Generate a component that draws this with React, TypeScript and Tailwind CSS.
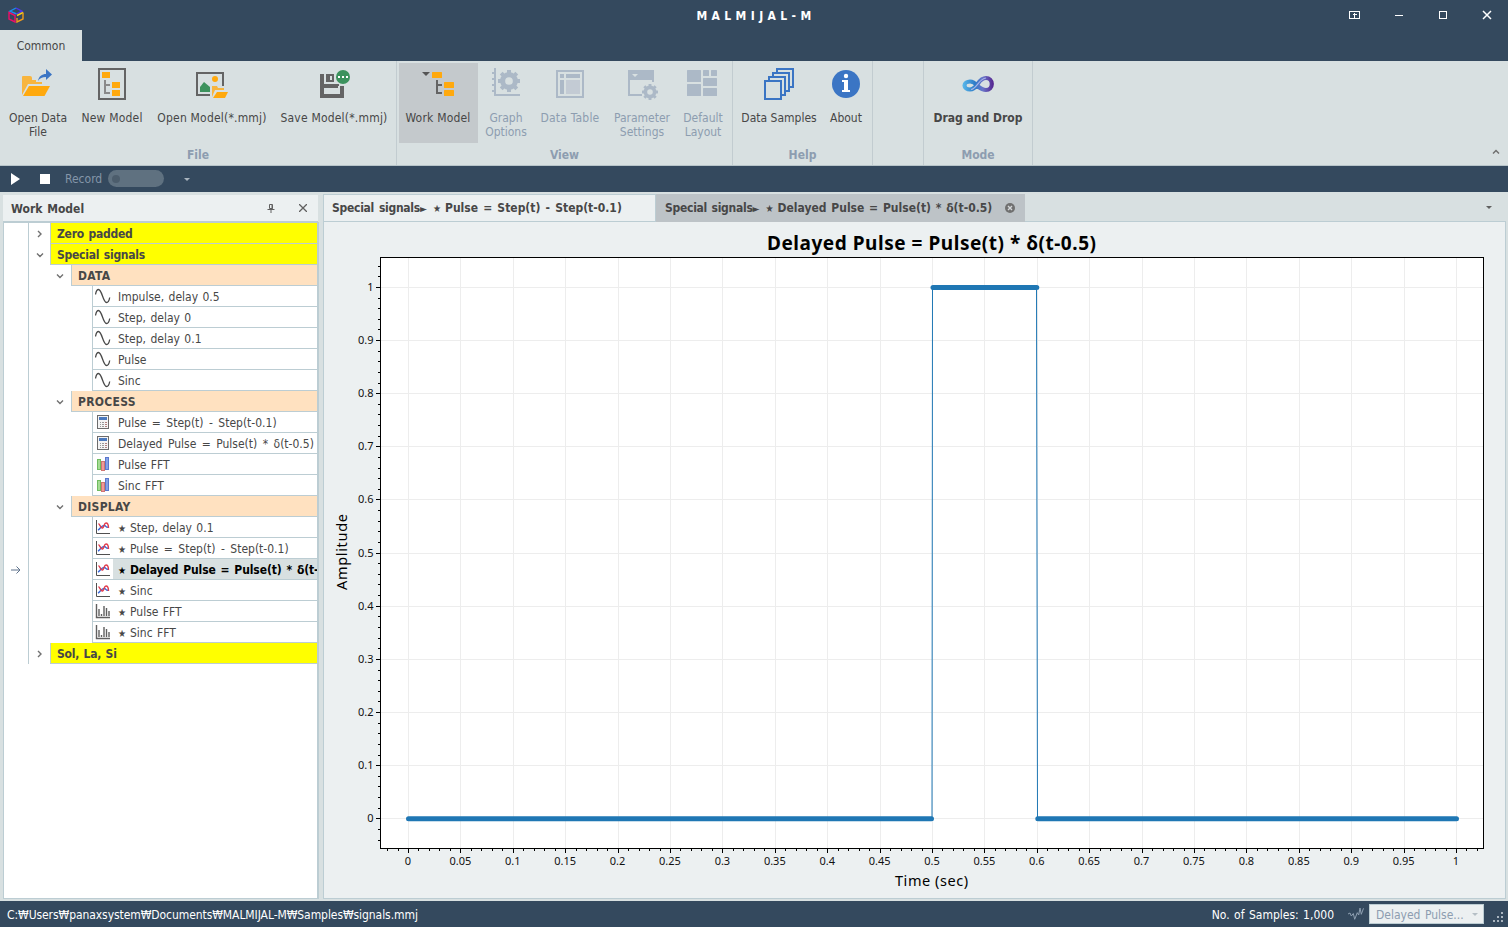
import React from 'react';

type RowKind = 'root' | 'group' | 'leaf';
type LeafIcon = 'wave' | 'calc' | 'bars' | 'plot' | 'spectrum';

interface TreeRow {
  kind: RowKind;
  label: string;
  open?: boolean;
  icon?: LeafIcon;
  star?: boolean;
  selected?: boolean;
}

const rows: TreeRow[] = [
  { kind: 'root', label: 'Zero padded', open: false },
  { kind: 'root', label: 'Special signals', open: true },
  { kind: 'group', label: 'DATA', open: true },
  { kind: 'leaf', label: 'Impulse, delay 0.5', icon: 'wave' },
  { kind: 'leaf', label: 'Step, delay 0', icon: 'wave' },
  { kind: 'leaf', label: 'Step, delay 0.1', icon: 'wave' },
  { kind: 'leaf', label: 'Pulse', icon: 'wave' },
  { kind: 'leaf', label: 'Sinc', icon: 'wave' },
  { kind: 'group', label: 'PROCESS', open: true },
  { kind: 'leaf', label: 'Pulse = Step(t) - Step(t-0.1)', icon: 'calc' },
  { kind: 'leaf', label: 'Delayed Pulse = Pulse(t) * δ(t-0.5)', icon: 'calc' },
  { kind: 'leaf', label: 'Pulse FFT', icon: 'bars' },
  { kind: 'leaf', label: 'Sinc FFT', icon: 'bars' },
  { kind: 'group', label: 'DISPLAY', open: true },
  { kind: 'leaf', label: 'Step, delay 0.1', icon: 'plot', star: true },
  { kind: 'leaf', label: 'Pulse = Step(t) - Step(t-0.1)', icon: 'plot', star: true },
  { kind: 'leaf', label: 'Delayed Pulse = Pulse(t) * δ(t-', icon: 'plot', star: true, selected: true },
  { kind: 'leaf', label: 'Sinc', icon: 'plot', star: true },
  { kind: 'leaf', label: 'Pulse FFT', icon: 'spectrum', star: true },
  { kind: 'leaf', label: 'Sinc FFT', icon: 'spectrum', star: true },
  { kind: 'root', label: 'Sol, La, Si', open: false },
];

/* ---------- Ribbon icons (32x32) ---------- */

const Icon32: React.FC<{ children: React.ReactNode }> = ({ children }) => (
  <svg width="32" height="32" viewBox="0 0 32 32" className="shrink-0">
    {children}
  </svg>
);

const OpenDataIcon = () => (
  <Icon32>
    <path d="M0 27V9a1 1 0 0 1 1-1h7a2 2 0 0 1 2 2v2h4v2h6v2H6z" fill="#f8b53e" />
    <path d="M7 18h21l-5.500 10H1z" fill="#ffa90e" />
    <path d="M16 13c1-5 4-7 8-7V1l6 5.500-6 5.500V9c-4 0-6 1-8 4z" fill="#3b75c4" />
  </Icon32>
);

const NewModelIcon = () => (
  <Icon32>
    <rect x="3" y="1" width="26" height="30" fill="none" stroke="#646464" strokeWidth="2" />
    <path d="M6 4h8v6H6zM16 14h8v6h-8zM16 22h8v6h-8z" fill="#ffa90e" />
    <path d="M9 12v13h5M9 17h5" fill="none" stroke="#8a8a8a" strokeWidth="2" />
  </Icon32>
);

const OpenModelIcon = () => (
  <Icon32>
    <path d="M14 27H1V5h26v13" fill="none" stroke="#646464" strokeWidth="2" />
    <circle cx="19" cy="11" r="3" fill="#ffa90e" />
    <path d="M4 24v-5l4-5 6 5v5z" fill="#3c925d" />
    <path d="M16 29V18h5l1 2h6v2h-9z" fill="#f8b53e" />
    <path d="M21 24h11l-3 6H17z" fill="#ffa90e" />
  </Icon32>
);

const SaveModelIcon = () => (
  <Icon32>
    <path fillRule="evenodd" d="M2 6h4v10h15v2h5v12H2zM6 20v6h16v-6z" fill="#646464" />
    <path d="M20 18h2v2h-2z" fill="#d8e0e1" />
    <path fillRule="evenodd" d="M8 6h8v8H8zM12 8v4h2V8z" fill="#646464" />
    <circle cx="25" cy="9" r="8.500" fill="#d8e0e1" />
    <circle cx="25" cy="9" r="7" fill="#3c925d" />
    <path d="M20 8h2v2h-2zM24 8h2v2h-2zM28 8h2v2h-2z" fill="#fff" />
  </Icon32>
);

const WorkModelIcon = () => (
  <Icon32>
    <path d="M0 4h8L4 8z" fill="#555" />
    <rect x="10" y="4" width="10" height="6" rx="0.500" fill="#ffa90e" />
    <rect x="22" y="14" width="10" height="6" rx="0.500" fill="#ffa90e" />
    <rect x="22" y="22" width="10" height="6" rx="0.500" fill="#ffa90e" />
    <path d="M15 12v13h5M15 17h5" fill="none" stroke="#646464" strokeWidth="2" />
  </Icon32>
);

// eight-toothed gear centred on cx, cy
const Gear: React.FC<{ cx: number; cy: number; r: number }> = ({ cx, cy, r }) => (
  <g fill="none" stroke="#acb9c7">
    <circle cx={cx} cy={cy} r={r * 0.58} strokeWidth={r * 0.46} />
    {[0, 45, 90, 135, 180, 225, 270, 315].map((a) => (
      <path
        key={a}
        d={`M${cx} ${cy - r * 0.7}V${cy - r}`}
        strokeWidth={r * 0.36}
        transform={`rotate(${a} ${cx} ${cy})`}
      />
    ))}
  </g>
);

const GraphOptionsIcon = () => (
  <Icon32>
    <path d="M5 0v28M4 27h26M2 5h3M2 11h3M2 17h3M2 23h3" fill="none" stroke="#acb9c7" strokeWidth="2" />
    <Gear cx={19} cy={13} r={11} />
  </Icon32>
);

const DataTableIcon = () => (
  <Icon32>
    <rect x="3" y="3" width="26" height="26" fill="none" stroke="#acb9c7" strokeWidth="2" />
    <path d="M6 6h4v4H6zM12 6h14v4H12zM6 12h4v14H6z" fill="#acb9c7" />
    <path d="M12 12h14v14H12z" fill="#c3cbd4" />
  </Icon32>
);

const ParameterIcon = () => (
  <Icon32>
    <path fillRule="evenodd" d="M2 2h26v12h-2v-2H4v14h12v2H2zM6 6l3 3 3-3z" fill="#acb9c7" />
    <Gear cx={24} cy={24} r={8} />
  </Icon32>
);

const LayoutIcon = () => (
  <Icon32>
    <g fill="#acb9c7">
      <rect x="0" y="2" width="14" height="12" rx="0.500" />
      <rect x="16" y="2" width="6" height="6" rx="0.500" />
      <rect x="24" y="2" width="6" height="6" rx="0.500" />
      <rect x="16" y="10" width="14" height="8" rx="0.500" />
      <rect x="0" y="16" width="14" height="12" rx="0.500" />
      <rect x="16" y="20" width="14" height="8" rx="0.500" />
    </g>
  </Icon32>
);

const SamplesIcon = () => (
  <Icon32>
    <g fill="#d8e0e1" stroke="#3b75c4" strokeWidth="2">
      <path d="M14 1h16v18H14z" />
      <path d="M10 5h16v18H10z" />
      <path d="M6 9h16v18H6z" />
      <path d="M2 13h16v18H2z" />
    </g>
  </Icon32>
);

const AboutIcon = () => (
  <Icon32>
    <circle cx="16" cy="16" r="14" fill="#3b75c4" />
    <circle cx="16" cy="8" r="2.200" fill="#fff" />
    <path d="M12 12h6v10h2v2h-8v-2h2v-8h-2z" fill="#fff" />
  </Icon32>
);

const InfinityIcon = () => (
  <Icon32>
    <defs>
      <linearGradient id="loop" gradientUnits="userSpaceOnUse" x1="0" y1="0" x2="32" y2="0">
        <stop offset="0" stopColor="#5cbcec" />
        <stop offset="0.400" stopColor="#2f7cc8" />
        <stop offset="0.650" stopColor="#6a74c8" />
        <stop offset="1" stopColor="#54208c" />
      </linearGradient>
    </defs>
    <path
      d="M15 17.500c-2-2.500-4-4-7-4a5.500 4 0 0 0 0 8c4 0 6-3 8-6s4-5.500 8-5.500a5.800 6 0 0 1 0 12c-4 0-6-2-9-4.500z"
      fill="none"
      stroke="url(#loop)"
      strokeWidth="4.200"
    />
    <path d="M9 21.500c6-1 8-11 15-11.500" fill="none" stroke="#a9b4e8" strokeWidth="1.200" />
  </Icon32>
);

/* ---------- Tree icons (16x16) ---------- */

const leafIcons: Record<LeafIcon, React.ReactNode> = {
  wave: (
    <path
      d="M0.500 6.500C1 3.500 2 1.500 3.500 1.500c3.500 0 4.500 13 8 13 1.700 0 2.700-2 3.200-5"
      fill="none"
      stroke="#484848"
      strokeWidth="1.300"
    />
  ),
  calc: (
    <>
      <rect x="2.500" y="1.500" width="11" height="13" fill="#f4f4f4" stroke="#6c6c6c" />
      <path d="M4 3h8v3H4z" fill="#4a78bd" />
      <path d="M5 8h1v1H5zM7 8h2v1H7zM5 10h1v1H5zM7 10h2v1H7zM5 12h1v1H5zM7 12h2v1H7z" fill="#999" />
      <path d="M10 8h2v1h-2zM10 10h2v1h-2zM10 12h2v1h-2z" fill="#b08080" />
    </>
  ),
  bars: (
    <>
      <rect x="2.500" y="3.500" width="3" height="10" fill="#a5dc94" stroke="#6fbb60" />
      <rect x="6.500" y="5.500" width="3" height="9" fill="#f09a98" stroke="#d07572" />
      <rect x="10.500" y="1.500" width="3" height="12" fill="#86a2e6" stroke="#5a78cc" />
    </>
  ),
  plot: (
    <>
      <path d="M1.500 1v13.500H15" fill="none" stroke="#505050" />
      <path d="M3 11c2-1 3.500-4.500 6-4.500s2 3 4.500 1.500" fill="none" stroke="#3a68d8" strokeWidth="1.400" />
      <path d="M3.500 4.500c1.500 1 2.500 5 4 4.500s1.500-5 3.500-5 2.500 2.500 2.500 5" fill="none" stroke="#e03c4c" strokeWidth="1.400" />
    </>
  ),
  spectrum: (
    <path
      d="M1.500 1v13.500H15M4 13V6M6.500 13v-2M9 13V3M11.500 13V5M14 13V8"
      fill="none"
      stroke="#606060"
      strokeWidth="1.400"
    />
  ),
};

const Chevron: React.FC<{ open?: boolean }> = ({ open }) => (
  <svg width="8" height="8" viewBox="0 0 8 8" className="shrink-0">
    <path
      d={open ? 'M1 2.500l3 3 3-3' : 'M2 1l3 3-3 3'}
      fill="none"
      stroke="#707070"
      strokeWidth="1.400"
    />
  </svg>
);

const Star = () => <span className="inline-block w-3 text-[10px] leading-none">★</span>;

const TreeItem: React.FC<{ row: TreeRow }> = ({ row }) => {
  const formula = row.label.includes('=');

  return (
    <div className="flex h-[21px]">
      <div className="w-[25px] shrink-0 border-r border-[#bccdd3] flex items-center justify-center">
        {row.selected && (
          <svg width="10" height="8" viewBox="0 0 10 8">
            <path d="M0 4h9M5.500 0.500L9 4 5.500 7.500" fill="none" stroke="#5d718a" />
          </svg>
        )}
      </div>
      {row.kind === 'root' && (
        <>
          <div className="w-[21px] shrink-0 flex items-center justify-center">
            <Chevron open={row.open} />
          </div>
          <div className="flex-1 bg-[#ffff00] border-l border-b border-[#bccdd3] pl-1.5 leading-[22px] font-bold tracking-[-0.24px]">
            {row.label}
          </div>
        </>
      )}
      {row.kind === 'group' && (
        <>
          <div className="w-[42px] shrink-0 pl-[27px] flex items-center">
            <Chevron open={row.open} />
          </div>
          <div className="flex-1 bg-[#ffe1c0] border-l border-b border-[#bccdd3] pl-1.5 leading-[22px] font-bold tracking-[0.3px]">
            {row.label}
          </div>
        </>
      )}
      {row.kind === 'leaf' && (
        <div className="flex-1 min-w-0 ml-[63px] border-l border-b border-[#bccdd3] flex">
          <svg width="16" height="16" viewBox="0 0 16 16" className="shrink-0 mt-0.5 ml-0.5 mr-0.5">
            {leafIcons[row.icon!]}
          </svg>
          <div
            className={`flex-1 min-w-0 overflow-hidden whitespace-nowrap pl-[5px] leading-[22px] ${
              row.selected
                ? 'bg-[#d8e0e1] text-black font-bold [word-spacing:1.2px] tracking-[-0.1px]'
                : formula
                  ? '[word-spacing:2px]'
                  : ''
            }`}
          >
            {row.star && <Star />}
            {row.label}
          </div>
        </div>
      )}
    </div>
  );
};

/* ---------- Ribbon ---------- */

interface ToolProps {
  icon: React.ReactNode;
  label: string;
  width: string;
  active?: boolean;
  disabled?: boolean;
  bold?: boolean;
  wide?: boolean;
}

const Tool: React.FC<ToolProps> = ({ icon, label, width, active, disabled, bold, wide }) => (
  <button
    className={`${width} h-20 shrink-0 pt-[5px] flex flex-col items-center ${active ? 'bg-[#c4c9cc] pr-px' : ''} ${
      disabled ? 'text-[#8d9db0]' : ''
    } ${bold ? 'font-bold' : ''} ${wide ? 'tracking-[0.2px]' : ''}`}
  >
    {icon}
    <span className="mt-[11px] leading-[14px] whitespace-pre text-center">{label}</span>
  </button>
);

const Group: React.FC<{ title?: string; width: string; children?: React.ReactNode }> = ({
  title,
  width,
  children,
}) => (
  <div className={`${width} shrink-0 border-r border-[#c2ccd0] pt-0.5 flex flex-col`}>
    <div className="flex h-20">{children}</div>
    <div className="mt-1 leading-4 text-center font-bold text-[#8d9db0]">{title}</div>
  </div>
);

/* ---------- Document tabs ---------- */

const TabTitle: React.FC<{ folder: string; name: string }> = ({ folder, name }) => (
  <span>
    <span className="tracking-[-0.27px]">{folder}</span>
    <span className="inline-block w-[13px] text-[10px] leading-none">►</span>
    <Star />
    {name}
  </span>
);

/* ---------- Chart ---------- */

const sx = (v: number) => 84.5 + v * 1048;
const sy = (v: number) => 596.8 - v * 531.4;
const px = (v: number) => Math.floor(v) + 0.5;
const range = (from: number, to: number) => Array.from({ length: to - from + 1 }, (_, i) => from + i);

const Chart = () => (
  <svg
    width="1181"
    height="676"
    viewBox="0 0 1181 676"
    className="block font-stretch-normal [word-spacing:0] font-['Noto_Sans',sans-serif]"
  >
    <rect x="56.500" y="35.500" width="1103" height="591" fill="#fff" />
    {range(0, 20).map((i) => (
      <path key={i} d={`M${px(sx(i / 20))} 36V626`} stroke="#ededed" />
    ))}
    {range(0, 10).map((i) => (
      <path key={i} d={`M57 ${px(sy(i / 10))}H1159`} stroke="#ededed" />
    ))}
    <rect x="56.500" y="35.500" width="1103" height="591" fill="none" stroke="#000" />

    {/* minor ticks */}
    {range(-2, 102).map((i) => (
      <path key={i} d={`M${px(sx(i / 100))} 627v2`} stroke="#000" />
    ))}
    {range(-2, 52).map((i) => (
      <path key={i} d={`M56 ${px(sy(i / 50))}h-2`} stroke="#000" />
    ))}

    {/* major ticks and labels */}
    {range(0, 20).map((i) => (
      <g key={i}>
        <path d={`M${px(sx(i / 20))} 627v4`} stroke="#000" />
        <text x={sx(i / 20) - 0.5} y="642.500" textAnchor="middle" fontSize="11" fill="#111">
          {i / 20}
        </text>
      </g>
    ))}
    {range(0, 10).map((i) => (
      <g key={i}>
        <path d={`M56 ${px(sy(i / 10))}h-4`} stroke="#000" />
        <text x="49.500" y={px(sy(i / 10)) + 3.5} textAnchor="end" fontSize="11" fill="#111">
          {i / 10}
        </text>
      </g>
    ))}

    {/* signal */}
    <path
      d={`M${sx(0)} ${sy(0)}H608L608.5 ${sy(1)}H712.5L713.5 ${sy(0)}H${sx(1)}`}
      fill="none"
      stroke="#1f77b4"
    />
    <path
      d={`M${sx(0)} ${sy(0)}H607.5M${sx(0.5) + 0.5} ${sy(1)}H${sx(0.6) - 0.5}M${sx(0.6) + 0.5} ${sy(0)}H${sx(1)}`}
      stroke="#1f77b4"
      strokeWidth="5"
      strokeLinecap="round"
    />

    <text x="607.500" y="28" textAnchor="middle" fontSize="19" fontWeight="700" textLength="329">
      Delayed Pulse = Pulse(t) * δ(t-0.5)
    </text>
    <text x="607.500" y="664" textAnchor="middle" fontSize="14.500" textLength="73">
      Time (sec)
    </text>
    <text x="23" y="330" textAnchor="middle" fontSize="14.500" textLength="76" transform="rotate(-90 23 330)">
      Amplitude
    </text>
  </svg>
);

export default function App() {
  return (
    <div className="w-[1508px] h-[927px] overflow-hidden flex flex-col bg-[#d8e0e1] text-[#474747] text-[12px] [word-spacing:1px] font-stretch-condensed font-['DejaVu_Sans','Noto_Sans_CJK_KR',sans-serif]">
      {/* Title bar */}
      <header className="h-[30px] shrink-0 bg-[#34495e] flex items-center pl-2 pr-[15px]">
        <svg width="16" height="16" viewBox="0 0 16 16" className="shrink-0" fill="none" strokeWidth="1.400">
          <path d="M8.500 7L2 4.200 8 1" stroke="#1d8df0" />
          <path d="M8 1l6 3.200L8.500 7" stroke="#5034f0" />
          <path d="M1 5.500V12l6 3V8.500z" stroke="#ec0f68" />
          <path d="M15 5.500L9 8.500" stroke="#f4d018" />
          <path d="M9 11v4l6-3V5.500" stroke="#f09a1c" />
        </svg>
        <div className="flex-1 pl-[139px] pt-px text-center text-white font-bold tracking-[4.4px]">MALMIJAL-M</div>
        <svg width="144" height="12" viewBox="0 0 144 12" fill="none" stroke="#fff" shapeRendering="crispEdges">
          <path d="M0.500 2.500h10v7h-10zM5.500 9V4M3.500 5.500h4" />
          <path d="M46 6.500h8" />
          <path d="M90.500 2.500h7v7h-7z" />
          <path d="M134 2l8 8M142 2l-8 8" strokeWidth="1.500" shapeRendering="auto" />
        </svg>
      </header>

      {/* Ribbon tabs */}
      <div className="h-[31px] shrink-0 bg-[#34495e] flex">
        <div className="w-[82px] bg-[#d8e0e1] leading-8 text-center">Common</div>
      </div>

      {/* Ribbon */}
      <div className="h-[105px] shrink-0 border-b border-[#b7c4c9] flex">
        <Group title="File" width="w-[397px]">
          <Tool icon={<OpenDataIcon />} label={'Open Data\nFile'} width="w-[76px]" />
          <Tool icon={<NewModelIcon />} label="New Model" width="w-[72px]" wide />
          <Tool icon={<OpenModelIcon />} label="Open Model(*.mmj)" width="w-32" wide />
          <Tool icon={<SaveModelIcon />} label="Save Model(*.mmj)" width="w-[116px]" wide />
        </Group>
        <Group title="View" width="w-[336px]">
          <div className="w-0.5" />
          <Tool icon={<WorkModelIcon />} label="Work Model" width="w-[79px]" active wide />
          <Tool icon={<GraphOptionsIcon />} label={'Graph\nOptions'} width="w-14" disabled />
          <Tool icon={<DataTableIcon />} label="Data Table" width="w-[72px]" disabled wide />
          <Tool icon={<ParameterIcon />} label={'Parameter\nSettings'} width="w-[72px]" disabled />
          <Tool icon={<LayoutIcon />} label={'Default\nLayout'} width="w-[50px]" disabled />
        </Group>
        <Group title="Help" width="w-[140px]">
          <Tool icon={<SamplesIcon />} label="Data Samples" width="w-[92px]" />
          <Tool icon={<AboutIcon />} label="About" width="w-[42px]" />
        </Group>
        <Group width="w-[51px]" />
        <Group title="Mode" width="w-[109px]">
          <Tool icon={<InfinityIcon />} label="Drag and Drop" width="w-[108px]" bold />
        </Group>
        <div className="flex-1 flex items-end justify-end pr-2 pb-[11px]">
          <svg width="8" height="5" viewBox="0 0 8 5">
            <path d="M1 4.500l3-3 3 3" fill="none" stroke="#707070" strokeWidth="1.500" />
          </svg>
        </div>
      </div>

      {/* Playback bar */}
      <div className="h-[26px] shrink-0 bg-[#34495e] flex items-center pl-[11px] text-[#8496a9]">
        <svg width="40" height="12" viewBox="0 0 40 12" fill="#fff">
          <path d="M0 0l9 6-9 6zM29 1h10v10H29z" />
        </svg>
        <span className="ml-3.5 w-[43px]">Record</span>
        <div className="mb-px w-14 h-[17px] rounded-full bg-[#5f7180] flex items-center pl-1">
          <div className="size-2 rounded-full bg-[#4c5d6c]" />
        </div>
        <svg width="6" height="3" viewBox="0 0 6 3" className="ml-5">
          <path d="M0 0h6L3 3z" fill="#aab5bf" />
        </svg>
      </div>

      {/* Workspace */}
      <main className="flex-1 min-h-0 flex pt-0.5 pb-0.5">
        <section className="ml-[3px] mt-px w-[316px] flex flex-col">
          <div className="h-[27px] shrink-0 w-[315px] bg-[#ecf0f1] border-b border-[#bccdd3] flex items-center pl-2 pr-[11px]">
            <span className="flex-1 pt-px font-bold">Work Model</span>
            <svg width="8" height="9" viewBox="0 0 8 9" fill="none" stroke="#606060" className="mr-6">
              <path d="M2.500 0.500h3v4h-3zM0.500 5.500h7M4 5v4M5 1v4" />
            </svg>
            <svg width="8" height="8" viewBox="0 0 8 8" stroke="#606060" strokeWidth="1.300">
              <path d="M0 0l8 8M8 0L0 8" />
            </svg>
          </div>
          <div className="flex-1 min-h-0 bg-white border border-t border-r-2 border-[#bccdd3]">
            {rows.map((row, i) => (
              <TreeItem key={i} row={row} />
            ))}
          </div>
        </section>

        <section className="ml-1 w-[1183px] flex flex-col">
          <div className="h-7 shrink-0 flex border-b border-[#bccdd3] font-bold leading-[26px] whitespace-nowrap">
            <div className="w-[333px] shrink-0 bg-[#ecf0f1] border-l border-t border-r border-[#bccdd3] pl-2 [word-spacing:1.400px]">
              <TabTitle folder="Special signals" name="Pulse = Step(t) - Step(t-0.1)" />
            </div>
            <div className="w-[369px] h-7 shrink-0 bg-[#bdc3c7] pl-[9px] pr-2.5 pt-px flex justify-between">
              <TabTitle folder="Special signals" name="Delayed Pulse = Pulse(t) * δ(t-0.5)" />
              <svg width="10" height="10" viewBox="0 0 10 10" className="mt-2">
                <circle cx="5" cy="5" r="5" fill="#707070" />
                <path d="M3 3l4 4M7 3L3 7" stroke="#d5d8da" strokeWidth="1.400" />
              </svg>
            </div>
            <div className="flex-1 flex items-center justify-end pr-3.5">
              <svg width="6" height="3" viewBox="0 0 6 3">
                <path d="M0 0h6L3 3z" fill="#606060" />
              </svg>
            </div>
          </div>
          <div className="flex-1 min-h-0 bg-[#ecf0f1] border-l border-r border-b border-[#bccdd3]">
            <Chart />
          </div>
        </section>
      </main>

      {/* Status bar */}
      <footer className="h-[26px] shrink-0 bg-[#34495e] text-white flex items-center pl-[7px] pr-[5px]">
        <span className="flex-1 pt-0.5 tracking-[-0.07px]">
          C:₩Users₩panaxsystem₩Documents₩MALMIJAL-M₩Samples₩signals.mmj
        </span>
        <span className="mr-3.5 pt-0.5">No. of Samples: 1,000</span>
        <svg width="16" height="14" viewBox="0 0 16 14" className="mr-[5px]">
          <path
            d="M0 7l2-1 1.300 3 2-2.500 1.400 5.800 2.600-6.600 1.400 2.300L12 1l1.300 6.300 2.200-6"
            fill="none"
            stroke="#8fa0b2"
          />
        </svg>
        <div className="w-[115px] h-5 bg-[#ecf0f1] border border-[#bccdd3] text-[#8d9db0] flex items-center justify-between pl-1.5 pr-[5px]">
          <span className="pt-px">Delayed Pulse...</span>
          <svg width="6" height="3" viewBox="0 0 6 3">
            <path d="M0 0h6L3 3z" fill="#b5bfc6" />
          </svg>
        </div>
        <svg width="10" height="10" viewBox="0 0 10 10" className="ml-[9px] mt-1.5">
          <path d="M8 0h2v2H8zM8 4h2v2H8zM8 8h2v2H8zM4 4h2v2H4zM4 8h2v2H4zM0 8h2v2H0z" fill="#a9b4bf" />
        </svg>
      </footer>
    </div>
  );
}
